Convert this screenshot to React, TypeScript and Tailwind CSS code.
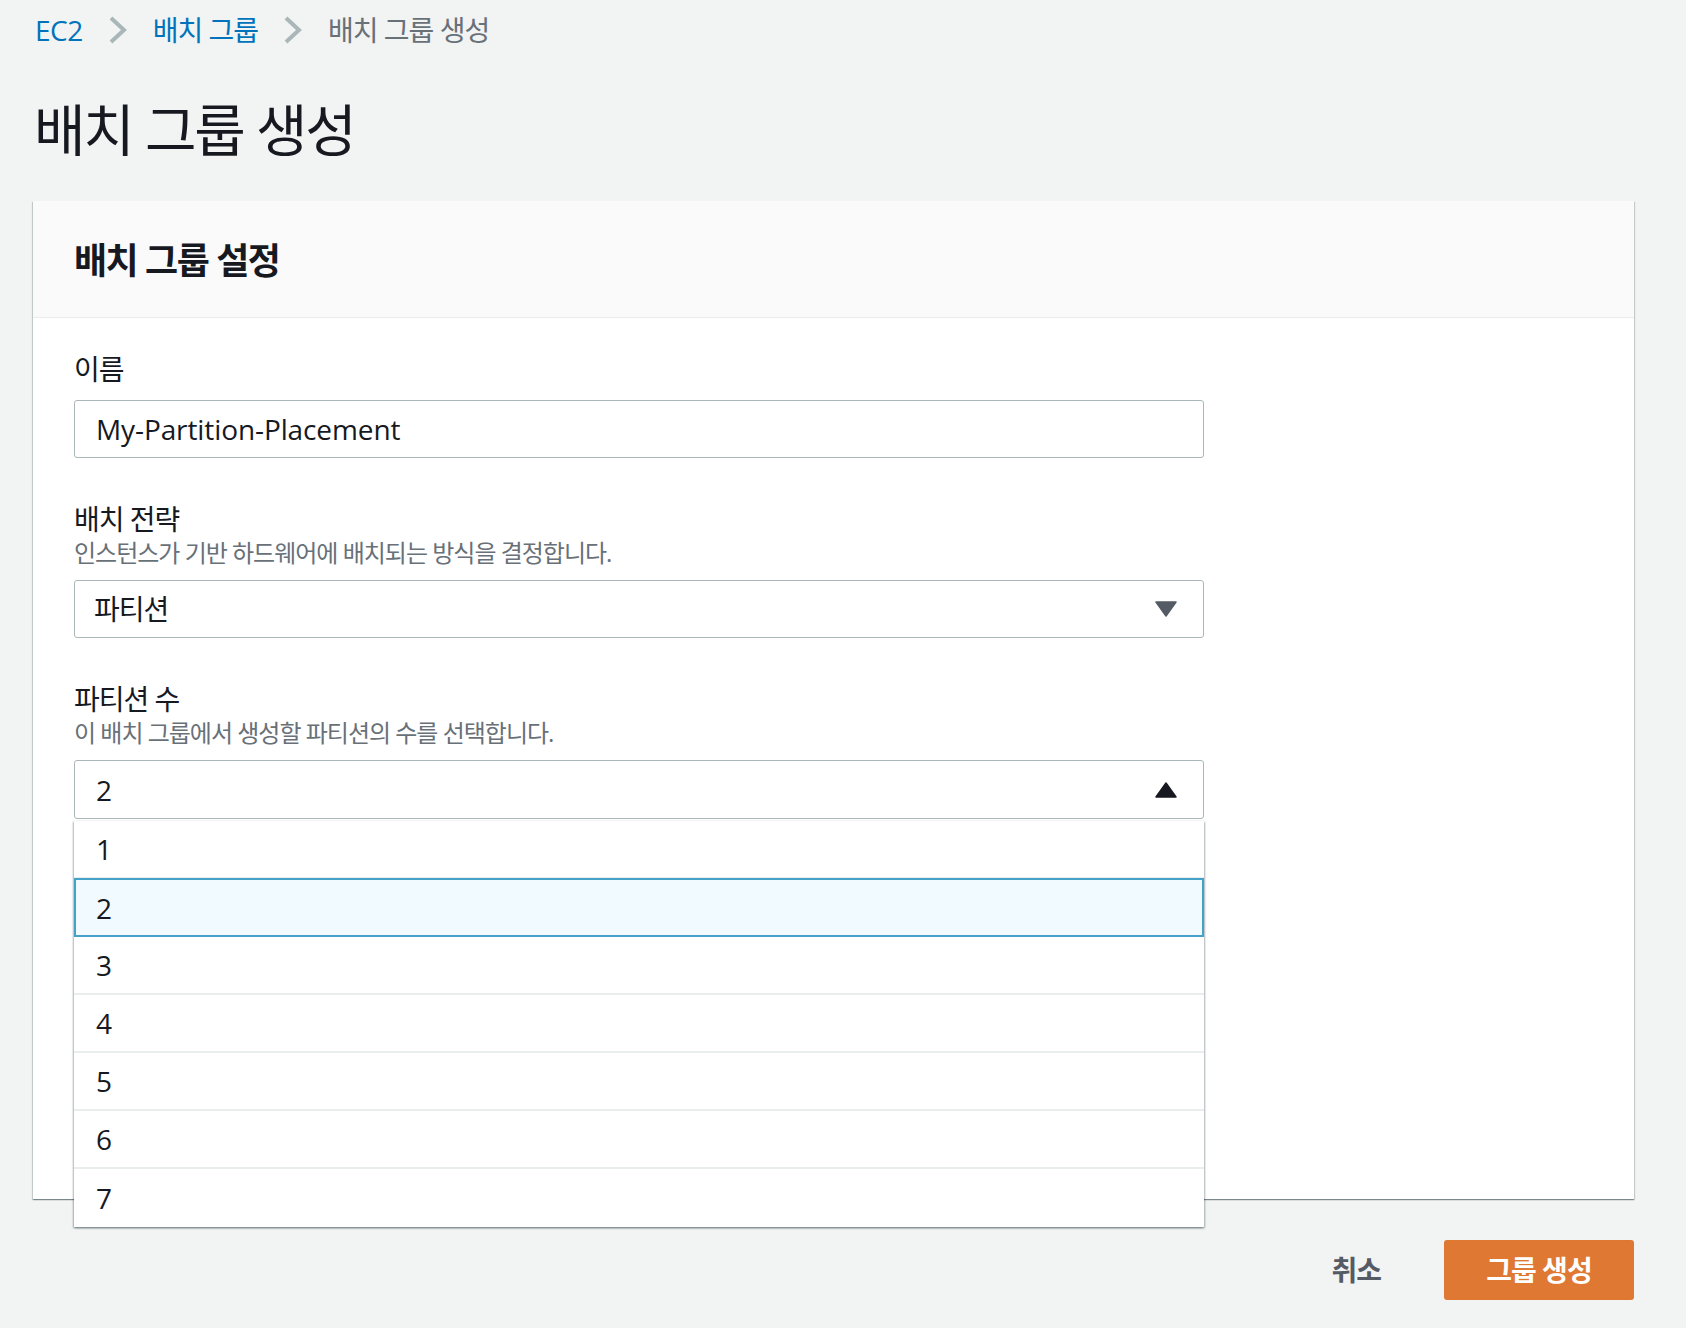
import { FC } from "react";

const font = "font-['Open_Sans','Noto_Sans_CJK_KR',sans-serif]";

const Chevron: FC = () => (
  <svg width="20" height="28" viewBox="0 0 20 28" className="mx-[25px]">
    <path d="M3 2 L16 14 L3 26" fill="none" stroke="#aab7b8" strokeWidth="4" />
  </svg>
);

const Caret: FC<{ up?: boolean }> = ({ up }) => (
  <svg width="22" height="16" viewBox="0 0 22 16">
    {up ? (
      <path d="M11 1 L21 15 L1 15 Z" fill="#16191f" stroke="#16191f" strokeWidth="1.5" strokeLinejoin="round" />
    ) : (
      <path d="M1 1 L21 1 L11 15 Z" fill="#545b64" stroke="#545b64" strokeWidth="1.5" strokeLinejoin="round" />
    )}
  </svg>
);

const options = ["1", "2", "3", "4", "5", "6", "7"];

const App: FC = () => {
  return (
    <div className={`${font} min-h-[1328px] bg-[#f2f3f3] pl-[33px] pr-[52px] pt-[8px] text-[#16191f]`}>
      {/* breadcrumb */}
      <nav className="flex items-center h-[44px] text-[28px] leading-[44px]">
        <span className="text-[#0073bb] ml-[2px] tracking-[-0.5px]">EC2</span>
        <Chevron />
        <span className="text-[#0073bb] tracking-[-1px]">배치 그룹</span>
        <Chevron />
        <span className="text-[#687078] tracking-[-1px]">배치 그룹 생성</span>
      </nav>

      <h1 className="mt-[43px] text-[56px] leading-[68px] font-normal ml-[1px] tracking-[-2.2px]">배치 그룹 생성</h1>

      {/* card */}
      <div className="mt-[38px] bg-white shadow-[0_1px_1px_0_rgba(0,28,36,0.3),1px_1px_1px_0_rgba(0,28,36,0.15),-1px_1px_1px_0_rgba(0,28,36,0.15)]">
        <div className="h-[117px] bg-[#fafafa] border-b border-[#eaeded] flex items-center px-[41px] pt-[3px]">
          <h2 className="text-[36px] leading-[44px] font-bold tracking-[-1.5px]">배치 그룹 설정</h2>
        </div>

        <div className="px-[41px] pt-[33px] h-[881px]">
          <div className="w-[1130px]">
            <label className="block text-[28px] leading-[36px] tracking-[-1px]">이름</label>
            <div className="mt-[13px] h-[58px] border border-[#aab7b8] rounded-[3px] flex items-center px-[21px] text-[28px] tracking-[-0.1px]">
              My-Partition-Placement
            </div>

            <label className="block mt-[43px] text-[28px] leading-[36px] tracking-[-1px]">배치 전략</label>
            <p className="text-[24px] leading-[32px] text-[#687078] tracking-[-1px]">인스턴스가 기반 하드웨어에 배치되는 방식을 결정합니다.</p>
            <div className="mt-[11px] h-[58px] border border-[#aab7b8] rounded-[3px] flex items-center justify-between pl-[19px] pr-[26px] text-[28px] tracking-[-1px]">
              <span>파티션</span>
              <Caret />
            </div>

            <label className="block mt-[43px] text-[28px] leading-[36px] tracking-[-1px]">파티션 수</label>
            <p className="text-[24px] leading-[32px] text-[#687078] tracking-[-1px]">이 배치 그룹에서 생성할 파티션의 수를 선택합니다.</p>
            <div className="relative mt-[11px]">
              <div className="h-[59px] border border-[#aab7b8] rounded-[3px] flex items-center justify-between pl-[21px] pr-[26px] text-[28px]">
                <span>2</span>
                <Caret up />
              </div>
              {/* open dropdown list */}
              <ul className="absolute left-0 right-0 top-[calc(100%+2px)] z-10 bg-white shadow-[0_1px_2px_0_rgba(0,28,36,0.35),1px_1px_2px_0_rgba(0,28,36,0.2),-1px_1px_2px_0_rgba(0,28,36,0.2)]">
                {options.map((o) =>
                  o === "2" ? (
                    <li key={o} className="h-[59px] -mt-[1px] border-2 border-[#44a2c8] bg-[#f1faff] flex items-center px-[20px] text-[28px]">
                      {o}
                    </li>
                  ) : (
                    <li key={o} className="h-[58px] border-b-2 border-[#eaeded] last:border-b-0 flex items-center px-[22px] text-[28px]">
                      {o}
                    </li>
                  )
                )}
              </ul>
            </div>
          </div>
        </div>
      </div>

      {/* actions */}
      <div className="mt-[41px] flex justify-end items-center">
        <button className="h-[60px] px-[40px] mr-[23px] text-[28px] font-bold text-[#545b64] tracking-[-1px]">취소</button>
        <button className="h-[60px] w-[190px] rounded-[3px] bg-[#df7833] text-white text-[28px] font-bold tracking-[-1px]">그룹 생성</button>
      </div>
    </div>
  );
};

export default App;
